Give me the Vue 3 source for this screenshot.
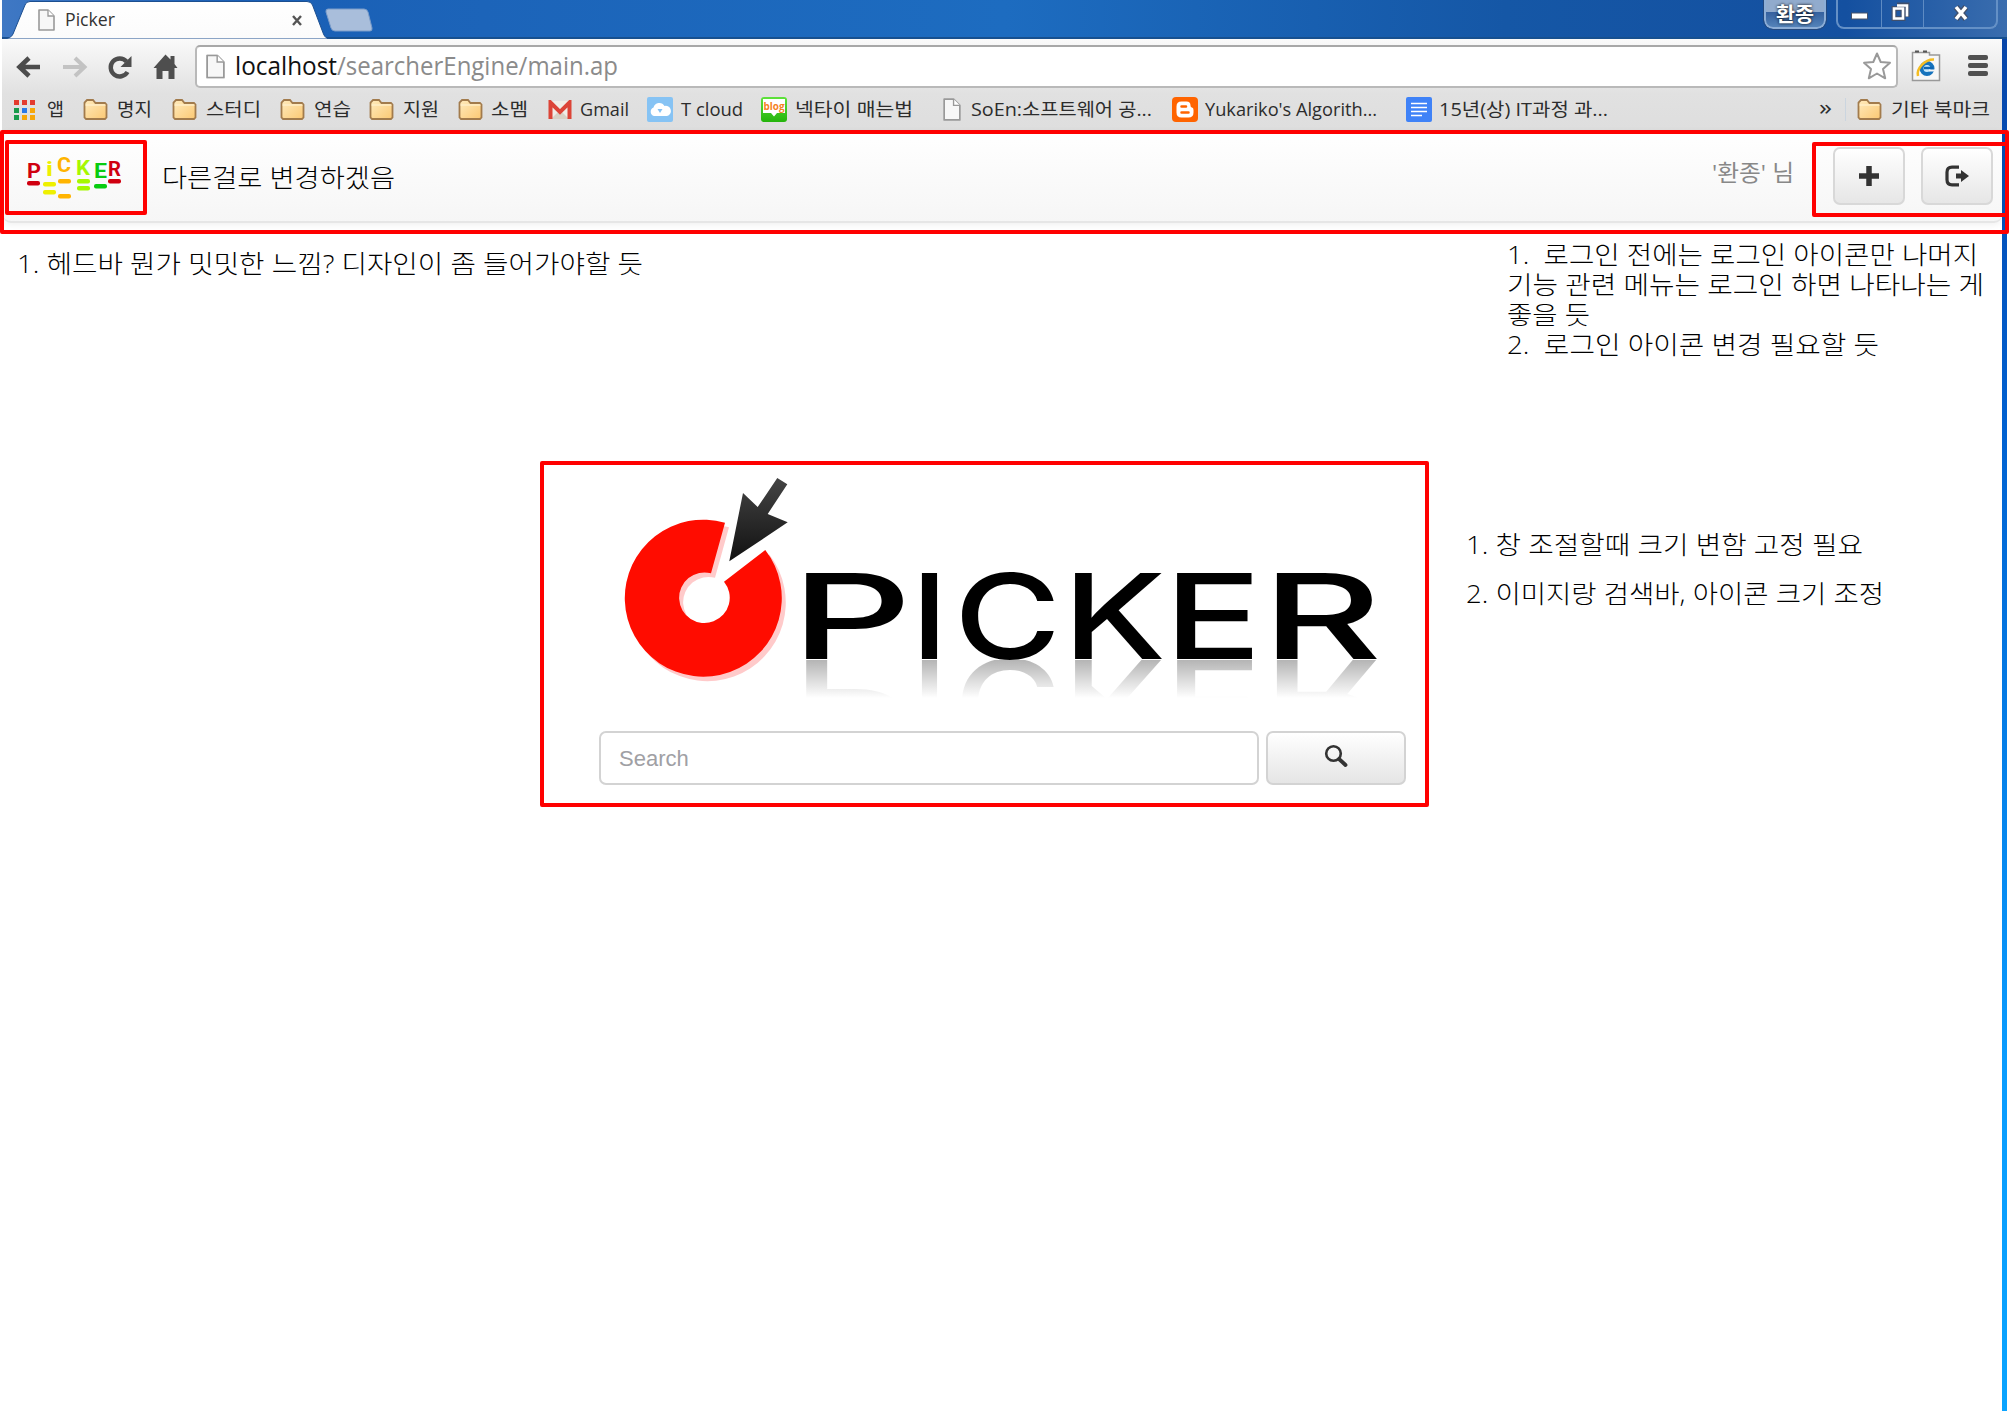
<script setup>
import { h } from 'vue'

// One line of text drawn at an exact width, baseline at `size` px from the top.
const FitText = (p) =>
  h(
    'svg',
    { width: p.w, height: Math.round(p.size * 1.3), style: 'display:block;overflow:visible;flex:none' },
    [
      h(
        'text',
        {
          x: 0,
          y: p.size,
          textLength: p.w,
          lengthAdjust: 'spacingAndGlyphs',
          'font-size': p.size,
          fill: 'currentColor',
          style: 'white-space:pre',
        },
        p.text
      ),
    ]
  )
FitText.props = ['w', 'size', 'text']

// step: distance to the next entry, gap: icon to label
const bookmarks = [
  { icon: 'apps', text: '앱', w: 17, step: 69, gap: 11 },
  { icon: 'folder', text: '명지', w: 35, step: 89, gap: 9 },
  { icon: 'folder', text: '스터디', w: 55, step: 108, gap: 9 },
  { icon: 'folder', text: '연습', w: 37, step: 89, gap: 9 },
  { icon: 'folder', text: '지원', w: 36, step: 89, gap: 9 },
  { icon: 'folder', text: '소멤', w: 37, step: 90, gap: 8 },
  { icon: 'gmail', text: 'Gmail', w: 49, step: 99, gap: 7 },
  { icon: 'cloud', text: 'T cloud', w: 62, step: 114, gap: 8 },
  { icon: 'blog', text: '넥타이 매는법', w: 118, step: 182, gap: 8 },
  { icon: 'page', text: 'SoEn:소프트웨어 공...', w: 181, step: 229, gap: 2 },
  { icon: 'blogger', text: "Yukariko's Algorith...", w: 172, step: 234, gap: 7 },
  { icon: 'docs', text: '15년(상) IT과정 과...', w: 169, step: 260, gap: 7 },
]

const wordmark = [
  { c: 'P', x: 791, w: 121 },
  { c: 'I', x: 911, w: 37 },
  { c: 'C', x: 954, w: 107 },
  { c: 'K', x: 1063, w: 103 },
  { c: 'E', x: 1164, w: 98 },
  { c: 'R', x: 1262, w: 120 },
]

const miniLetters = [
  { c: 'P', x: 27, y: 178, w: 14, color: '#d00010' },
  { c: 'i', x: 46, y: 176, w: 7, color: '#eef000' },
  { c: 'C', x: 57, y: 172, w: 14, color: '#ffb400' },
  { c: 'K', x: 76, y: 175, w: 14, color: '#a6f800' },
  { c: 'E', x: 94, y: 178, w: 13, color: '#08cc10' },
  { c: 'R', x: 108, y: 176, w: 13, color: '#d00010' },
]
const miniBars = [
  { x: 27, y: 181, color: '#d00010' },
  { x: 43, y: 182, color: '#eef000' },
  { x: 43, y: 190, color: '#eef000' },
  { x: 58, y: 179, color: '#ffb400' },
  { x: 58, y: 194, color: '#ffb400' },
  { x: 77, y: 179, color: '#a6f800' },
  { x: 77, y: 186, color: '#a6f800' },
  { x: 94, y: 184, color: '#08cc10' },
  { x: 108, y: 179, color: '#d00010' },
]
</script>

<template>
  <div class="screen">
    <svg width="0" height="0" class="defs">
      <defs>
        <linearGradient id="gFolder" x1="0" y1="0" x2="1" y2="1">
          <stop offset="0" stop-color="#ffebbd" /><stop offset="1" stop-color="#fbc873" />
        </linearGradient>
        <linearGradient id="gGreen" x1="0" y1="0" x2="0" y2="1">
          <stop offset="0" stop-color="#5fe23c" /><stop offset="1" stop-color="#25b40c" />
        </linearGradient>
        <symbol id="page" viewBox="0 0 17 22">
          <path d="M1 1h9l6 6v14H1z" fill="#f7f7f7" stroke="#999" stroke-width="1.6" stroke-linejoin="round" />
          <path d="M10 1v6h6" fill="#fff" stroke="#999" stroke-width="1.3" />
        </symbol>
        <symbol id="folder" viewBox="0 0 24 21">
          <path d="M1 5V3.5L3.500 1h6L12 4h9.500L23 5.500v13L21.500 20h-19L1 18.500z" fill="url(#gFolder)" stroke="#a27b4c" stroke-width="1.800" />
          <path d="M2 6h20" stroke="#fff2d0" stroke-width="1.200" />
        </symbol>
      </defs>
    </svg>

    <div class="window">
      <div class="titlebar">
        <svg class="tabs" width="375" height="39" viewBox="2 0 375 39">
          <defs>
            <linearGradient id="gTab" x1="0" y1="0" x2="0" y2="1">
              <stop offset="0" stop-color="#fff" /><stop offset="1" stop-color="#fbfbfb" />
            </linearGradient>
          </defs>
          <path d="M2 39q9 0 11-5L25 5q1-3.500 5-3.500h277q4 0 5.500 3.500l11 29q2 5 7 5z" fill="url(#gTab)" stroke="#1c4f90" stroke-width="1" />
          <path d="M328 9h36q3 0 4 3l4 16q.5 3-2 3h-35q-3 0-4-3l-5-16q-.5-3 2-3z" fill="#a9bedb" stroke="#7b9cc9" />
          <use href="#page" x="38" y="9" width="17" height="22" />
          <path d="M293 16l8 9M301 16l-8 9" stroke="#555" stroke-width="2.400" />
        </svg>
        <div class="tab-title"><FitText :w="50" :size="18" text="Picker" /></div>
        <div class="profile"><FitText :w="38" :size="20" text="환종" /></div>
        <div class="controls">
          <span class="ctl min"><svg width="20" height="28"><rect x="1.500" y="13" width="16" height="6" fill="#fff" stroke="#46536b" /></svg></span>
          <span class="ctl max"><svg width="20" height="28"><g fill="none" stroke="#41506c" stroke-width="5"><path d="M6 5h10v12M3 8.500h9v10H3z" /></g><g fill="none" stroke="#fff" stroke-width="2.600"><path d="M6 5.500h10v11M3 8.500h9v10H3z" /></g></svg></span>
          <span class="ctl cls"><svg width="20" height="28"><path d="M5 7l10 12M15 7L5 19" stroke="#41506c" stroke-width="6" /><path d="M5 7l10 12M15 7L5 19" stroke="#fff" stroke-width="3.500" /></svg></span>
        </div>
      </div>

      <div class="toolbar">
        <svg class="nav" width="193" height="52" viewBox="2 39 193 52">
          <path d="M40 66H21M29 57l-9.500 9 9.500 9" fill="none" stroke="#4c4c4c" stroke-width="4.600" />
          <path d="M63 66h19M75 57l9.500 9-9.500 9" fill="none" stroke="#c3c3c3" stroke-width="4" />
          <path d="M127.500 71a9 9 0 1 1-1-10.500" fill="none" stroke="#4e4e4e" stroke-width="4.400" />
          <path d="M131.500 55v11h-11z" fill="#4e4e4e" />
          <path d="M165.500 53.500l5 5V55h4v8l3 4h-3v11h-6v-8h-6v8h-6V67h-3z" fill="#4e4e4e" />
        </svg>
        <div class="omnibox">
          <svg width="19" height="25" viewBox="0 0 17 22"><use href="#page" width="17" height="22" /></svg>
          <div class="url host"><FitText :w="102" :size="25" text="localhost" /></div>
          <div class="url path"><FitText :w="281" :size="25" text="/searcherEngine/main.ap" /></div>
          <svg class="star" width="30" height="30" viewBox="0 0 30 30">
            <path d="M15 2.500l3.700 8.500 9.300.8-7 6.300 2.200 9.200L15 22.500l-8.200 4.800L9 18.100l-7-6.300 9.300-.8z" fill="#fff" stroke="#999" stroke-width="2" stroke-linejoin="round" />
          </svg>
        </div>
        <svg class="ext" width="30" height="32" viewBox="0 0 30 32">
          <path d="M1.500 30.500V2.500h17V5h10v25.500z" fill="#f7f7f7" stroke="#999" stroke-width="1.500" />
          <path d="M4 1.500h4M12 1.500h4" stroke="#555" stroke-width="2" />
          <circle cx="16" cy="18.500" r="5.500" fill="#c9e9fb" stroke="#1673bd" stroke-width="4" />
          <path d="M13 18h9" stroke="#0d65b3" stroke-width="2.500" />
          <path d="M7 26C5 19 14 9 23 9.500" fill="none" stroke="#f4bd22" stroke-width="2.500" />
          <path d="M18 20.500h6" stroke="#f4f4f4" stroke-width="2" />
        </svg>
        <svg width="20" height="24" viewBox="0 0 20 24"><g fill="#505050"><rect y="1" width="20" height="5" rx="2" /><rect y="9" width="20" height="5" rx="2" /><rect y="17" width="20" height="5" rx="2" /></g></svg>
      </div>

      <div class="bookmarks">
        <div v-for="b in bookmarks" :key="b.text" class="bm" :style="{ width: b.step + 'px', gap: b.gap + 'px' }">
          <svg v-if="b.icon === 'apps'" width="22" height="22" viewBox="0 0 22 22">
            <g fill="#e33b2e"><path d="M0 1h5v5H0zM8 1h5v5H8zM16 1h5v5h-5z" /></g>
            <path d="M0 9h5v5H0zM0 16h5v5H0z" fill="#189a4b" /><path d="M8 9h5v5H8z" fill="#2979e8" />
            <path d="M16 9h5v5h-5zM8 16h5v5H8zM16 16h5v5h-5z" fill="#f6a70a" />
          </svg>
          <svg v-else-if="b.icon === 'folder'" width="25" height="21" viewBox="0 0 25 21"><use href="#folder" width="25" height="21" /></svg>
          <svg v-else-if="b.icon === 'gmail'" width="25" height="20" viewBox="0 0 25 20">
            <path d="M3 1h18v18H3z" fill="#f0ece6" /><path d="M3 19l9-9 9 9z" fill="#d8d1c5" />
            <path d="M2.500 19V2.500L12 12l9.500-9.500V19" fill="none" stroke="#dc4437" stroke-width="4" />
          </svg>
          <svg v-else-if="b.icon === 'cloud'" width="26" height="25" viewBox="0 0 26 25">
            <rect width="26" height="25" rx="2" fill="#86c3f4" />
            <path d="M7 19a4.500 4.500 0 0 1-.5-8.500A6 6 0 0 1 17.500 9 5 5 0 0 1 20 19z" fill="#fff" /><path d="M10.500 12l2.500 4 2.500-4z" fill="#86c3f4" />
          </svg>
          <svg v-else-if="b.icon === 'blog'" width="26" height="25" viewBox="0 0 26 25">
            <rect width="26" height="25" rx="3" fill="url(#gGreen)" /><path d="M2 2h22v14h-8l-3 3.500-3-3.500H2z" fill="#fff" />
            <text x="2.500" y="13" textLength="21" lengthAdjust="spacingAndGlyphs" font-size="11" font-weight="700" fill="#f5821f">blog</text>
          </svg>
          <svg v-else-if="b.icon === 'page'" width="26" height="23" viewBox="0 0 26 23"><use href="#page" y="0" width="18" height="23" /></svg>
          <svg v-else-if="b.icon === 'blogger'" width="26" height="25" viewBox="0 0 26 25">
            <rect width="26" height="25" rx="4" fill="#ff6400" />
            <path d="M9.500 4.500h5q4 0 4 4 0 2 1.500 2t1.500 2.500v2.500q0 5-5 5h-7q-5 0-5-5v-6q0-5 5-5z" fill="#fff" />
            <path d="M9.500 9.500h4.500M9.500 15.500h7" stroke="#ff6400" stroke-width="2.500" stroke-linecap="round" />
          </svg>
          <svg v-else width="26" height="25" viewBox="0 0 26 25">
            <rect width="26" height="25" rx="2" fill="#3f82f7" /><path d="M5 6.500h16M5 10.500h16M5 14.500h16M5 18.500h11" stroke="#fff" stroke-width="1.600" />
          </svg>
          <div class="lbl"><FitText :w="b.w" :size="18.5" :text="b.text" /></div>
        </div>
        <div class="more"><FitText :w="13" :size="22" text="»" /></div>
        <div class="bm other">
          <svg width="25" height="21" viewBox="0 0 25 21"><use href="#folder" width="25" height="21" /></svg>
          <div class="lbl"><FitText :w="99" :size="18.5" text="기타 북마크" /></div>
        </div>
      </div>

      <div class="navbar">
        <svg class="mini" width="100" height="46" viewBox="25 155 100 46">
          <g font-weight="700" font-size="20.500" font-family="Roboto, sans-serif">
            <text v-for="l in miniLetters" :key="l.c" :x="l.x" :y="l.y" :textLength="l.w" lengthAdjust="spacingAndGlyphs" :fill="l.color">{{ l.c }}</text>
          </g>
          <rect v-for="(b, i) in miniBars" :key="i" :x="b.x" :y="b.y" width="13" height="4.500" rx="2" :fill="b.color" />
        </svg>
        <div class="user"><FitText :w="82" :size="22.5" text="'환종' 님" /></div>
        <button class="btn"><svg width="20" height="20"><path d="M10 0v20M0 10h20" stroke="#333" stroke-width="5.500" /></svg></button>
        <button class="btn"><svg width="26" height="22" viewBox="0 0 26 22"><path d="M15 2.200H8q-5 0-5 5v7.600q0 5 5 5h7" fill="none" stroke="#333" stroke-width="3.200" /><path d="M12 8.500h5V5l8 6-8 6v-3.500h-5z" fill="#333" /></svg></button>
      </div>

      <div class="content">
        <svg class="logo" width="804" height="235" viewBox="598 475 804 235">
          <defs>
            <linearGradient id="gArrow" x1="0" y1="0" x2="0" y2="1">
              <stop offset="0" stop-color="#444" /><stop offset="1" stop-color="#111" />
            </linearGradient>
            <linearGradient id="gFade" gradientUnits="userSpaceOnUse" x1="0" y1="659" x2="0" y2="698">
              <stop offset="0" stop-color="#fff" stop-opacity=".3" /><stop offset="1" stop-color="#fff" stop-opacity="0" />
            </linearGradient>
            <mask id="fade" maskUnits="userSpaceOnUse" x="790" y="659.500" width="600" height="40">
              <rect x="790" y="659.500" width="600" height="40" fill="url(#gFade)" />
            </mask>
          </defs>
          <path transform="translate(4 4.500)" d="M725 522.700A78.500 78.500 0 1 0 765.300 550L724 581.700A25.300 25.300 0 1 1 711 573.300z" fill="#ffcaca" />
          <path d="M725 522.700A78.500 78.500 0 1 0 765.300 550L724 581.700A25.300 25.300 0 1 1 711 573.300z" fill="#ff0c00" />
          <path d="M729.300 561.300L743 493l14.700 14 19.600-29 10 6.300-19.600 29.700 20 8.300z" fill="url(#gArrow)" />
          <g class="word">
            <text v-for="l in wordmark" :key="l.c" :x="l.x" y="659.300" :textLength="l.w" lengthAdjust="spacingAndGlyphs">{{ l.c }}</text>
          </g>
          <g mask="url(#fade)" aria-hidden="true">
            <g class="word" transform="translate(0 1318.600) scale(1 -1)">
              <text v-for="l in wordmark" :key="l.c" :x="l.x" y="659.300" :textLength="l.w" lengthAdjust="spacingAndGlyphs">{{ l.c }}</text>
            </g>
          </g>
        </svg>
        <div class="search">
          <div class="field">Search</div>
          <button class="go"><svg width="24" height="24" viewBox="0 0 24 24"><circle cx="9.500" cy="9.500" r="7.300" fill="none" stroke="#333" stroke-width="2.600" /><path d="M15 15l6.500 6" stroke="#333" stroke-width="3.800" stroke-linecap="round" /></svg></button>
        </div>
      </div>
    </div>

    <div class="mark m-head"></div>
    <div class="mark m-logo"></div>
    <div class="mark m-btns"></div>
    <div class="mark m-main"></div>
    <div class="note n-change"><FitText :w="233" :size="25" text="다른걸로 변경하겠음" /></div>
    <div class="note n-head"><FitText :w="626" :size="25" text="1. 헤드바 뭔가 밋밋한 느낌? 디자인이 좀 들어가야할 듯" /></div>
    <div class="note n-login">
      <FitText :w="471" :size="25" text="1.  로그인 전에는 로그인 아이콘만 나머지" />
      <FitText :w="477" :size="25" text="기능 관련 메뉴는 로그인 하면 나타나는 게" />
      <FitText :w="83" :size="25" text="좋을 듯" />
      <FitText :w="372" :size="25" text="2.  로그인 아이콘 변경 필요할 듯" />
    </div>
    <div class="note n-size">
      <FitText :w="397" :size="25" text="1. 창 조절할때 크기 변함 고정 필요" />
      <FitText :w="418" :size="25" text="2. 이미지랑 검색바, 아이콘 크기 조정" />
    </div>
  </div>
</template>

<style>
body { background: #fff; }
</style>

<style scoped>
.screen { position: relative; width: 2014px; height: 1411px; overflow: hidden; background: #fff; font-family: "Open Sans", "Noto Sans CJK KR", sans-serif; color: #000; }
.defs { position: absolute; }
.window { display: flex; flex-direction: column; width: 2005px; height: 1411px; margin-left: 2px; box-sizing: border-box; border-right: 5px solid; border-image: linear-gradient(#0842a4, #0060d0 30%, #0a9cff 75%, #0aa4ff) 1; }
.titlebar { display: flex; align-items: flex-start; flex: none; height: 39px; margin-right: -5px; box-sizing: border-box; border-bottom: 2px solid #17508f; background: linear-gradient(90deg, #3f78c4, #1a5fb5 12%, #1c64b9 24%, #1d6cc0 50%, #1557a6 75%, #1450a0 92%, #3a6dae); }
.tabs { flex: none; }
.tab-title { width: 60px; margin-left: -312px; margin-top: 8px; color: #333; }
.profile { display: flex; justify-content: center; width: 62px; height: 29px; padding-top: 2px; margin-left: auto; box-sizing: border-box; border: 2px solid #8daed6; border-top: 0; border-radius: 0 0 9px 9px; outline: 1px solid #24497e; background: linear-gradient(#91abcd 45%, #35619f 46%, #5483b9); color: #fff; font-weight: 700; text-shadow: 0 0 3px #000; }
.controls { display: flex; width: 162px; height: 29px; margin: 0 9px 0 10px; box-sizing: border-box; border: 2px solid #6490c6; border-top: 0; border-radius: 0 0 8px 8px; }
.ctl { display: flex; justify-content: center; flex: none; box-sizing: border-box; border-right: 1px solid #5e8bc3; }
.min { width: 44px; padding-left: 1px; }
.max { width: 42px; padding-right: 3px; }
.cls { width: 74px; border-right: 0; }
.toolbar { display: flex; align-items: center; flex: none; height: 54px; padding-right: 14px; background: linear-gradient(#fafafa, #e1e1e1); }
.nav { flex: none; }
.omnibox { display: flex; align-items: center; width: 1703px; height: 43px; box-sizing: border-box; padding-left: 9px; padding-right: 4px; border: 2px solid #b9b9b9; border-top-color: #a8a8a8; border-radius: 5px; background: #fff; }
.host { margin-left: 10px; color: #111; }
.path { color: #8b8b8b; }
.url { margin-top: 0; font-family: "Open Sans", sans-serif; }
.star { margin-left: auto; }
.ext { margin: 0 27px 0 13px; }
.bookmarks { display: flex; align-items: center; flex: none; height: 37px; padding-left: 12px; padding-bottom: 4px; box-sizing: border-box; background: linear-gradient(#e1e1e1, #dedede); color: #2c2c2c; }
.bm { display: flex; align-items: center; flex: none; }
.bm > svg { flex: none; }
.bm .lbl { margin-top: -1px; }
.more { width: 26px; margin-left: 153px; margin-top: -5px; }
.other { gap: 9px; padding-left: 11px; border-left: 1px solid #cbd5df; }
.navbar { display: flex; align-items: flex-start; flex: none; height: 93px; margin-left: 1px; padding: 0 9px 0 22px; box-sizing: border-box; border-bottom: 2px solid #e6e6e6; border-radius: 0 0 8px 8px; background: linear-gradient(#fff, #f6f6f6); box-shadow: 0 2px 6px #0000000f; }
.mini { margin-top: 25px; }
.user { margin: 28px 39px 0 auto; color: #888; }
.btn { display: flex; align-items: center; justify-content: center; width: 72px; height: 58px; margin: 17px 0 0 16px; padding: 0; border: 2px solid #d8d8d8; border-radius: 7px; background: linear-gradient(#fff, #e6e6e6); }
.user + .btn { margin-left: 0; }
.content { display: flex; flex-direction: column; align-items: flex-start; margin: 252px 0 0 596px; }
.logo { display: block; }
.word text { font-family: Inter, sans-serif; font-weight: 500; font-size: 118px; fill: #000; }
.search { display: flex; gap: 7px; margin-top: 21px; margin-left: 1px; }
.field { width: 660px; height: 54px; box-sizing: border-box; padding: 0 18px; border: 2px solid #d3d3d3; border-radius: 7px; color: #a0a0a4; font: 22px/51px "Liberation Sans", Arial, sans-serif; }
.go { display: flex; align-items: center; justify-content: center; width: 140px; height: 54px; box-sizing: border-box; padding: 0 0 4px; border: 2px solid #d3d3d3; border-radius: 7px; background: linear-gradient(#fff, #e5e5e5); }
.mark { position: absolute; box-sizing: border-box; border: 4px solid #f00; border-radius: 2px; }
.m-head { left: 0; top: 130px; width: 2009px; height: 104px; }
.m-logo { left: 5px; top: 140px; width: 142px; height: 75px; }
.m-btns { left: 1812px; top: 142px; width: 197px; height: 75px; }
.m-main { left: 540px; top: 461px; width: 889px; height: 346px; }
.note { position: absolute; display: flex; flex-direction: column; font-weight: 300; }
.n-change { left: 162px; top: 162px; }
.n-head { left: 17px; top: 248px; }
.n-login { left: 1507px; top: 239px; }
.n-login > * { height: 30px; }
.n-size { left: 1466px; top: 529px; gap: 16px; }
</style>
